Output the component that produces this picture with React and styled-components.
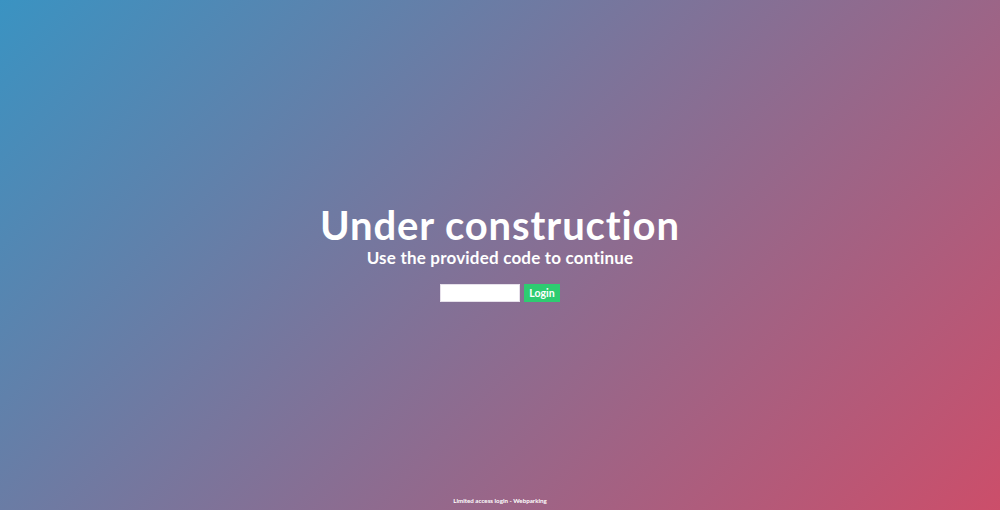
import React from "react";
import styled, { createGlobalStyle } from "styled-components";

const Global = createGlobalStyle`
  html, body { margin: 0; padding: 0; height: 100%; }
  body {
    font-family: "Lato", "Open Sans", sans-serif;
    background: linear-gradient(134deg, #3a93c2 0%, #cc4e6a 100%);
    color: #fff;
  }
  #root { height: 100%; }
`;

const Page = styled.div`
  height: 510px;
  display: flex;
  flex-direction: column;
  box-sizing: border-box;
`;

const Main = styled.main`
  flex: 1;
  display: flex;
  flex-direction: column;
  align-items: center;
  justify-content: center;
  padding-top: 8px;
`;

const Title = styled.h1`
  margin: 0;
  font-size: 40px;
  font-weight: 700;
  line-height: 44px;
  letter-spacing: 0.9px;
`;

const Subtitle = styled.h2`
  margin: 0;
  font-size: 17px;
  font-weight: 700;
  line-height: 22px;
  letter-spacing: 0.2px;
`;

const Form = styled.form`
  display: flex;
  gap: 4px;
  margin-top: 15px;
`;

const Input = styled.input`
  width: 80px;
  height: 18px;
  box-sizing: border-box;
  border: 1px solid #e6e0ea;
  background: #fff;
  padding: 0 4px;
  outline: none;
`;

const Button = styled.button`
  height: 18px;
  width: 36px;
  padding: 0;
  border: none;
  background: #2ecc71;
  color: #fff;
  font-family: "Lato", sans-serif;
  font-weight: 700;
  font-size: 10.5px;
  cursor: pointer;
`;

const Footer = styled.footer`
  text-align: center;
  font-size: 6.2px;
  font-weight: 700;
  padding-bottom: 5px;
  line-height: 8px;
`;

export default function App() {
  return (
    <>
      <Global />
      <Page>
        <Main>
          <Title>Under construction</Title>
          <Subtitle>Use the provided code to continue</Subtitle>
          <Form onSubmit={(e) => e.preventDefault()}>
            <Input type="password" />
            <Button type="submit">Login</Button>
          </Form>
        </Main>
        <Footer>Limited access login - Webparking</Footer>
      </Page>
    </>
  );
}
